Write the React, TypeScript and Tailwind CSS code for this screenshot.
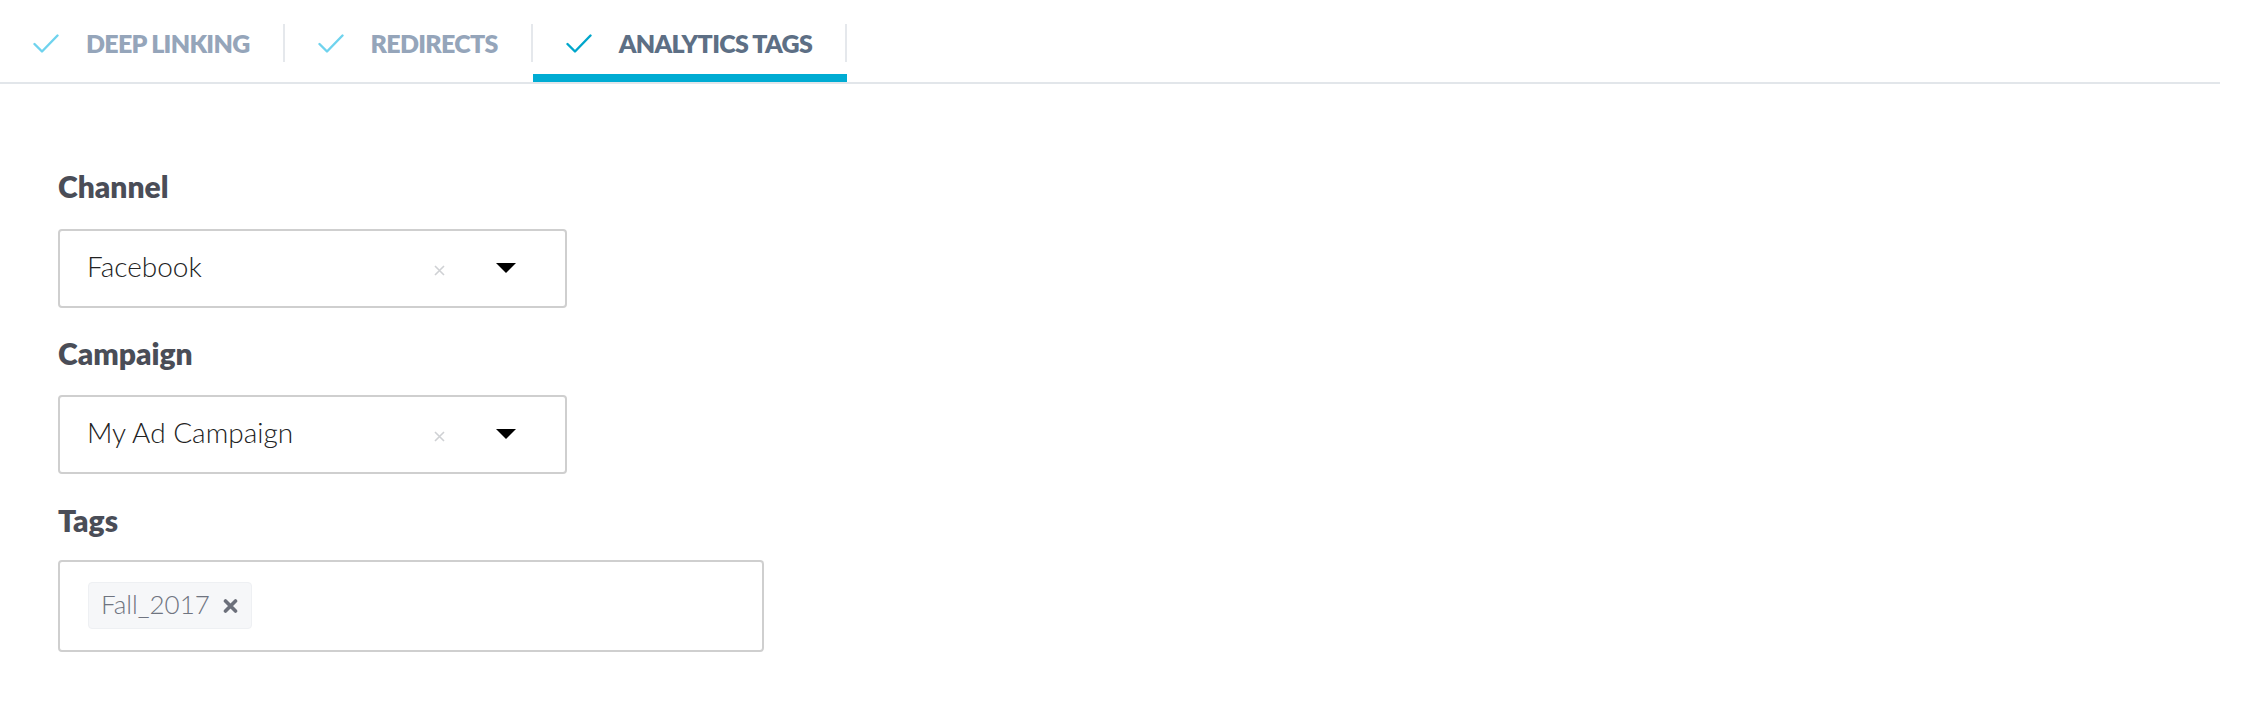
import React from 'react';

type Tab = {
    label: string;
    active?: boolean;
};

const tabs: Tab[] = [
    { label: 'DEEP LINKING' },
    { label: 'REDIRECTS' },
    { label: 'ANALYTICS TAGS', active: true },
];

function CheckMark({ active }: { active?: boolean }) {
    return (
        <svg width="26" height="19" viewBox="0 0 26 19" fill="none" className="shrink-0">
            <polyline
                points="1.5,10 9,17.5 24.5,1.5"
                stroke={active ? '#00a6cb' : '#6fd3ee'}
                strokeWidth="2.4"
                strokeLinecap="round"
                strokeLinejoin="round"
            />
        </svg>
    );
}

function Select({ value }: { value: string }) {
    return (
        <div className="flex h-[79px] w-[509px] items-center rounded-[4px] border-2 border-[#cfcfcf] bg-white pl-[27px] pr-[49px]">
            <span className="mb-[6px] flex-1 text-[28px] font-light text-[#222222]">{value}</span>
            <svg width="11" height="11" viewBox="0 0 11 11" className="mr-[51px] mt-[4px]">
                <path d="M1 1 L10 10 M10 1 L1 10" stroke="#cfd1d4" strokeWidth="1.6" />
            </svg>
            <svg width="20" height="10" viewBox="0 0 20 10" className="mt-[-2px]">
                <polygon points="0,0 20,0 10,10" fill="#000000" />
            </svg>
        </div>
    );
}

function FieldLabel({ children }: { children: React.ReactNode }) {
    return <div className="text-[30px] leading-[36px] font-extrabold text-[#4a4d57]">{children}</div>;
}

export default function App() {
    return (
        <div className="min-h-[710px] bg-white font-['Lato','Open_Sans',sans-serif]">
            <div className="mr-[22px] flex border-b-2 border-[#e2e6ea]">
                {tabs.map((tab) => (
                    <div key={tab.label} className="flex flex-col">
                        <div className="mt-[24px] flex h-[38px] items-center gap-[27px] border-r-2 border-[#e5e8ec] px-[33px]">
                            <CheckMark active={tab.active} />
                            <span
                                className={`text-[25px] leading-none font-extrabold tracking-[-0.7px] ${tab.active ? 'text-[#5d6f85]' : 'text-[#95a5ba]'}`}
                            >
                                {tab.label}
                            </span>
                        </div>
                        <div className={`mt-[12px] h-[8px] ${tab.active ? 'bg-[#00acd3]' : 'bg-transparent'}`} />
                    </div>
                ))}
            </div>

            <div className="flex flex-col items-start pl-[58px]">
                <div className="mt-[84px] mb-[25px]">
                    <FieldLabel>Channel</FieldLabel>
                </div>
                <Select value="Facebook" />

                <div className="mt-[27px] mb-[24px]">
                    <FieldLabel>Campaign</FieldLabel>
                </div>
                <Select value="My Ad Campaign" />

                <div className="mt-[28px] mb-[22px]">
                    <FieldLabel>Tags</FieldLabel>
                </div>
                <div className="flex h-[92px] w-[706px] items-start rounded-[4px] border-2 border-[#cfcfcf] bg-white pl-[28px] pt-[20px]">
                    <div className="flex h-[47px] items-center gap-[13px] rounded-[4px] border border-[#eef0f3] bg-[#f6f7f9] pl-[12px] pr-[13px]">
                        <span className="mb-[2px] text-[26px] font-light text-[#6f7480]">Fall_2017</span>
                        <svg width="15" height="14" viewBox="0 0 15 14">
                            <path d="M2.5 2 L12.5 12 M12.5 2 L2.5 12" stroke="#6c707b" strokeWidth="3.6" strokeLinecap="round" />
                        </svg>
                    </div>
                </div>
            </div>
        </div>
    );
}
